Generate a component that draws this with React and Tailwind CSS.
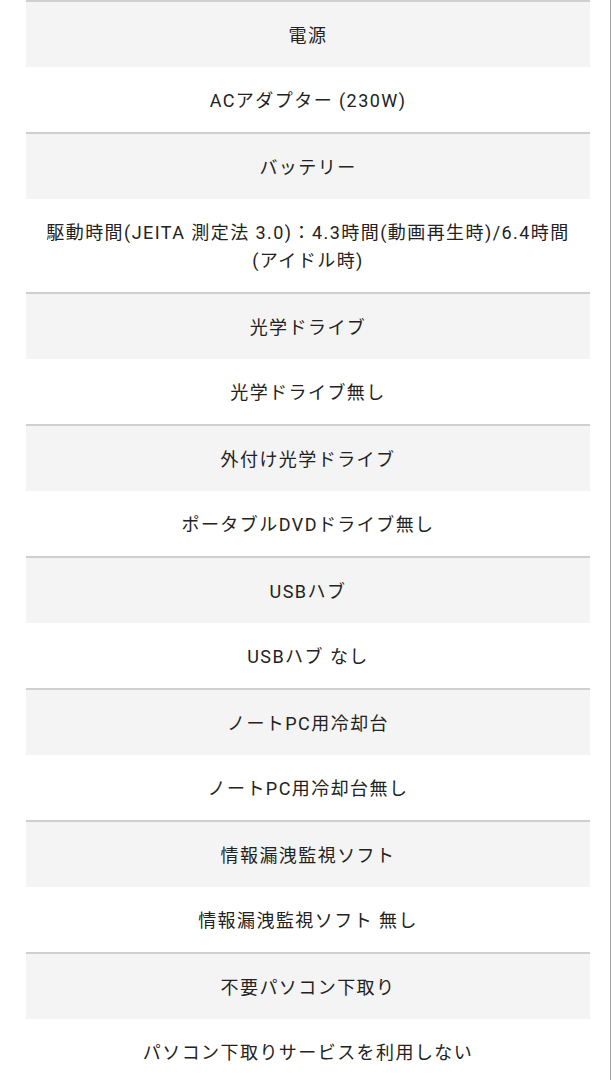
const specs = [
  { label: '電源', values: ['ACアダプター (230W)'] },
  {
    label: 'バッテリー',
    values: ['駆動時間(JEITA 測定法 3.0)：4.3時間(動画再生時)/6.4時間(アイドル時)'],
  },
  { label: '光学ドライブ', values: ['光学ドライブ無し'] },
  { label: '外付け光学ドライブ', values: ['ポータブルDVDドライブ無し'] },
  { label: 'USBハブ', values: ['USBハブ なし'] },
  { label: 'ノートPC用冷却台', values: ['ノートPC用冷却台無し'] },
  { label: '情報漏洩監視ソフト', values: ['情報漏洩監視ソフト 無し'] },
  { label: '不要パソコン下取り', values: ['パソコン下取りサービスを利用しない'] },
]

function SpecRow({ label, values }) {
  return (
    <div className="border-t-2 border-[#cfcfcf]">
      <div className="bg-[#f4f4f4] px-5 pt-[19.5px] pb-[17.5px] text-center leading-7">{label}</div>
      {values.map((value) => (
        <div key={value} className="bg-white px-5 pt-[19.5px] pb-[17.5px] text-center leading-7">
          {value}
        </div>
      ))}
    </div>
  )
}

export default function App() {
  return (
    <div className="min-h-screen overflow-hidden border-r border-[#a0a0a0] bg-white">
      <div
        className="ml-[26px] w-[564px] text-[18px] tracking-[0.08em] text-[#222]"
        style={{ fontFamily: 'Roboto, "Noto Sans CJK JP", sans-serif' }}
      >
        {specs.map((spec) => (
          <SpecRow key={spec.label} {...spec} />
        ))}
      </div>
    </div>
  )
}
